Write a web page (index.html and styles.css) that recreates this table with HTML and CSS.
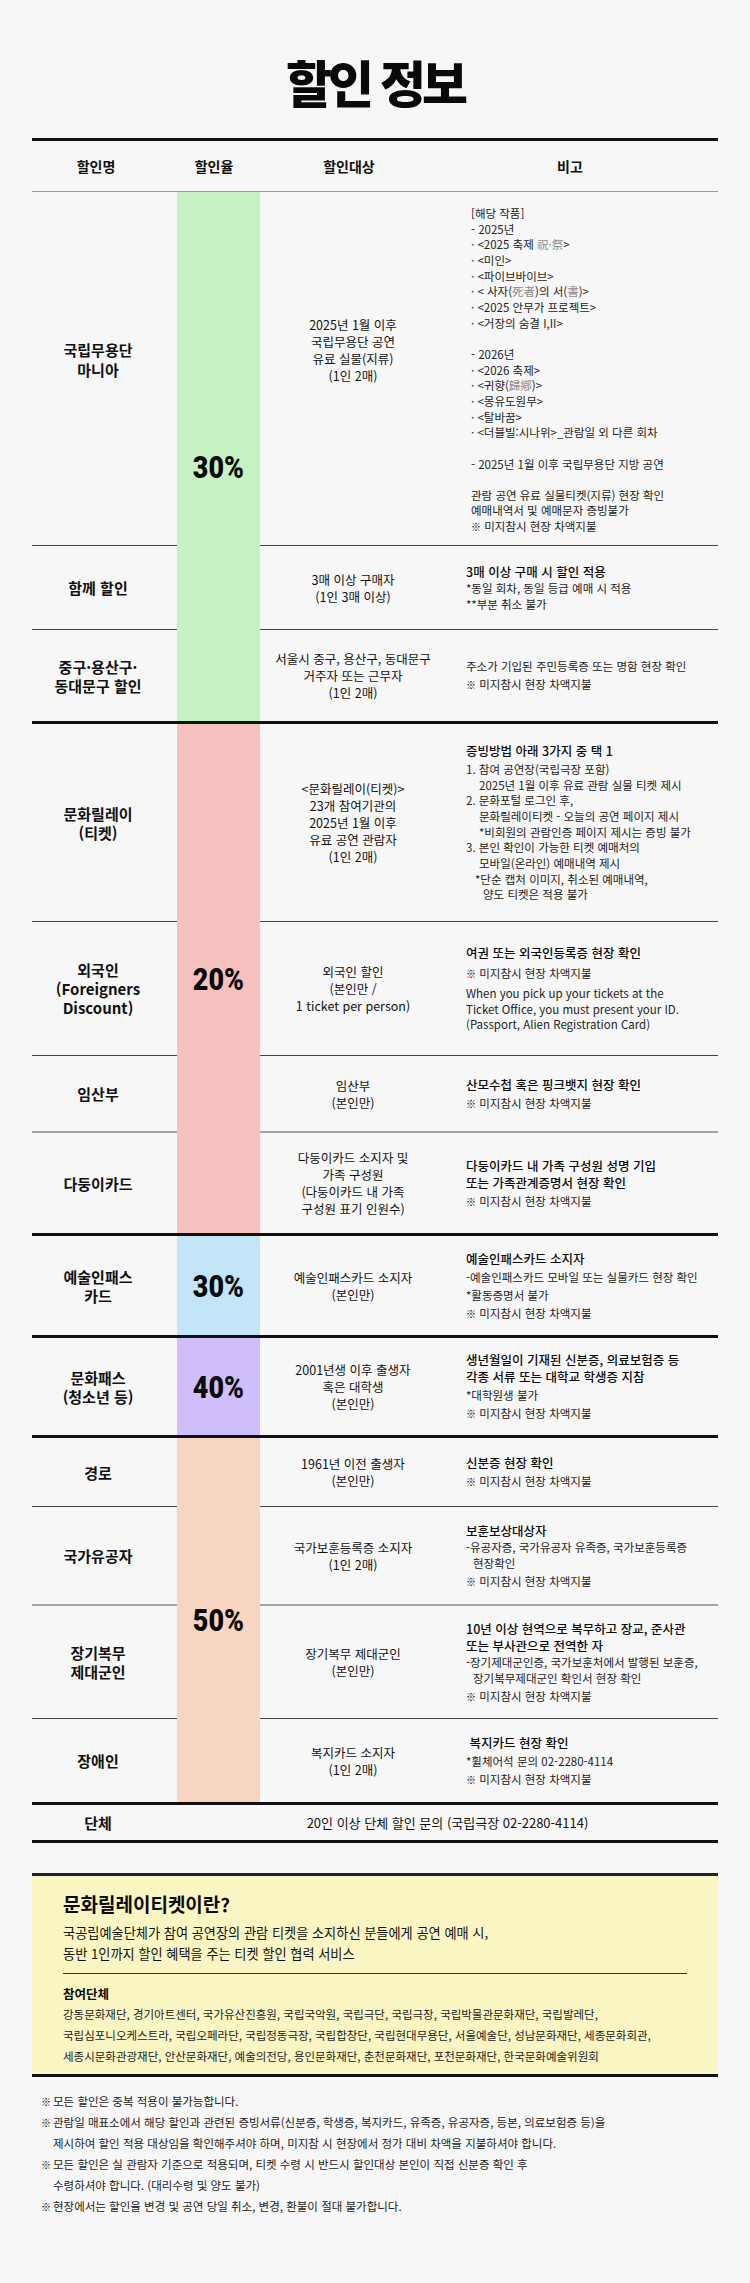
FILE: index.html
```html
<!DOCTYPE html>
<html lang="ko">
<head>
<meta charset="utf-8">
<title>할인 정보</title>
<link rel="stylesheet" href="styles.css">
</head>
<body>
<main class="page">
  <h1 class="title">할인 정보</h1>

  <section class="table">
    <div class="cols head">
      <div class="h-name">할인명</div>
      <div class="h-rate">할인율</div>
      <div class="h-target">할인대상</div>
      <div class="h-note">비고</div>
    </div>

    <!-- 30% group -->
    <div class="group first">
      <div class="rate green span3 rate-first"><span class="pct">30%</span></div>

      <div class="name mania-name">국립무용단<br>마니아</div>
      <div class="target mania-target">2025년 1월 이후<br>국립무용단 공연<br>유료 실물(지류)<br>(1인 2매)</div>
      <div class="note dense mania-note h354">
        <p>[해당 작품]<br>- 2025년<br>· &lt;2025 축제 <span class="hanja">祝·祭</span>&gt;<br>· &lt;미인&gt;<br>· &lt;파이브바이브&gt;<br>· &lt; 사자(<span class="hanja">死者</span>)의 서(<span class="hanja">書</span>)&gt;<br>· &lt;2025 안무가 프로젝트&gt;<br>· &lt;거장의 숨결 I,II&gt;<br><br>- 2026년<br>· &lt;2026 축제&gt;<br>· &lt;귀향(<span class="hanja">歸鄕</span>)&gt;<br>· &lt;몽유도원무&gt;<br>· &lt;탈바꿈&gt;<br>· &lt;더블빌:시나위&gt;_관람일 외 다른 회차<br><br>- 2025년 1월 이후 국립무용단 지방 공연<br><br>관람 공연 유료 실물티켓(지류) 현장 확인<br>예매내역서 및 예매문자 증빙불가<br><span class="mk">※</span> 미지참시 현장 차액지불</p>
      </div>

      <div class="name">함께 할인</div>
      <div class="target">3매 이상 구매자<br>(1인 3매 이상)</div>
      <div class="note h84">
        <p class="lead">3매 이상 구매 시 할인 적용</p>
        <p class="tight">*동일 회차, 동일 등급 예매 시 적용<br>**부분 취소 불가</p>
      </div>

      <div class="name">중구·용산구·<br>동대문구 할인</div>
      <div class="target">서울시 중구, 용산구, 동대문구<br>거주자 또는 근무자<br>(1인 2매)</div>
      <div class="note h91">
        <p>주소가 기입된 주민등록증 또는 명함 현장 확인</p>
        <p><span class="mk">※</span> 미지참시 현장 차액지불</p>
      </div>
    </div>

    <!-- 20% group -->
    <div class="group">
      <div class="rate pink span4"><span class="pct">20%</span></div>

      <div class="name">문화릴레이<br>(티켓)</div>
      <div class="target">&lt;문화릴레이(티켓)&gt;<br>23개 참여기관의<br>2025년 1월 이후<br>유료 공연 관람자<br>(1인 2매)</div>
      <div class="note h198">
        <p class="lead">증빙방법 아래 3가지 중 택 1</p>
        <p class="dense-p">1. 참여 공연장(국립극장 포함)<br><span class="ind2">2025년 1월 이후 유료 관람 실물 티켓 제시</span>2. 문화포털 로그인 후,<br><span class="ind2">문화릴레이티켓 - 오늘의 공연 페이지 제시</span><span class="ind2">*비회원의 관람인증 페이지 제시는 증빙 불가</span>3. 본인 확인이 가능한 티켓 예매처의<br><span class="ind2">모바일(온라인) 예매내역 제시</span><span class="ind1">*단순 캡처 이미지, 취소된 예매내역,</span><span class="ind3">양도 티켓은 적용 불가</span></p>
      </div>

      <div class="name">외국인<br>(Foreigners<br>Discount)</div>
      <div class="target">외국인 할인<br>(본인만 /<br>1 ticket per person)</div>
      <div class="note h134 roomy">
        <p class="lead">여권 또는 외국인등록증 현장 확인</p>
        <p><span class="mk">※</span> 미지참시 현장 차액지불</p>
        <p class="eng">When you pick up your tickets at the<br>Ticket Office, you must present your ID.<br>(Passport, Alien Registration Card)</p>
      </div>

      <div class="name lt">임산부</div>
      <div class="target lt">임산부<br>(본인만)</div>
      <div class="note lt h77">
        <p class="lead">산모수첩 혹은 핑크뱃지 현장 확인</p>
        <p><span class="mk">※</span> 미지참시 현장 차액지불</p>
      </div>

      <div class="name">다둥이카드</div>
      <div class="target">다둥이카드 소지자 및<br>가족 구성원<br>(다둥이카드 내 가족<br>구성원 표기 인원수)</div>
      <div class="note h100">
        <p class="lead">다둥이카드 내 가족 구성원 성명 기입<br>또는 가족관계증명서 현장 확인</p>
        <p><span class="mk">※</span> 미지참시 현장 차액지불</p>
      </div>
    </div>

    <!-- 30% art pass -->
    <div class="group">
      <div class="rate blue span1"><span class="pct">30%</span></div>
      <div class="name">예술인패스<br>카드</div>
      <div class="target">예술인패스카드 소지자<br>(본인만)</div>
      <div class="note h99">
        <p class="lead">예술인패스카드 소지자</p>
        <p>-예술인패스카드 모바일 또는 실물카드 현장 확인</p>
        <p>*활동증명서 불가</p>
        <p><span class="mk">※</span> 미지참시 현장 차액지불</p>
      </div>
    </div>

    <!-- 40% -->
    <div class="group">
      <div class="rate purple span1"><span class="pct">40%</span></div>
      <div class="name">문화패스<br>(청소년 등)</div>
      <div class="target">2001년생 이후 출생자<br>혹은 대학생<br>(본인만)</div>
      <div class="note h97">
        <p class="lead">생년월일이 기재된 신분증, 의료보험증 등<br>각종 서류 또는 대학교 학생증 지참</p>
        <p>*대학원생 불가</p>
        <p><span class="mk">※</span> 미지참시 현장 차액지불</p>
      </div>
    </div>

    <!-- 50% -->
    <div class="group">
      <div class="rate peach span4"><span class="pct">50%</span></div>

      <div class="name">경로</div>
      <div class="target">1961년 이전 출생자<br>(본인만)</div>
      <div class="note h69">
        <p class="lead">신분증 현장 확인</p>
        <p><span class="mk">※</span> 미지참시 현장 차액지불</p>
      </div>

      <div class="name lt">국가유공자</div>
      <div class="target lt">국가보훈등록증 소지자<br>(1인 2매)</div>
      <div class="note lt h99">
        <p class="lead">보훈보상대상자</p>
        <p class="tight">-유공자증, 국가유공자 유족증, 국가보훈등록증<br><span class="ind-dash">현장확인</span></p>
        <p><span class="mk">※</span> 미지참시 현장 차액지불</p>
      </div>

      <div class="name">장기복무<br>제대군인</div>
      <div class="target">장기복무 제대군인<br>(본인만)</div>
      <div class="note h113">
        <p class="lead">10년 이상 현역으로 복무하고 장교, 준사관<br>또는 부사관으로 전역한 자</p>
        <p class="tight">-장기제대군인증, 국가보훈처에서 발행된 보훈증,<br><span class="ind-dash">장기복무제대군인 확인서 현장 확인</span></p>
        <p><span class="mk">※</span> 미지참시 현장 차액지불</p>
      </div>

      <div class="name">장애인</div>
      <div class="target">복지카드 소지자<br>(1인 2매)</div>
      <div class="note h83">
        <p class="lead">&nbsp;복지카드 현장 확인</p>
        <p>*휠체어석 문의 02-2280-4114</p>
        <p><span class="mk">※</span> 미지참시 현장 차액지불</p>
      </div>
    </div>

    <div class="cols group-row">
      <div class="name solo">단체</div>
      <div class="group-text">20인 이상 단체 할인 문의 (국립극장 02-2280-4114)</div>
    </div>
  </section>

  <section class="relay">
    <h2 class="relay-title">문화릴레이티켓이란?</h2>
    <p class="relay-desc">국공립예술단체가 참여 공연장의 관람 티켓을 소지하신 분들에게 공연 예매 시,<br>동반 1인까지 할인 혜택을 주는 티켓 할인 협력 서비스</p>
    <hr class="relay-rule">
    <h3 class="relay-sub">참여단체</h3>
    <p class="relay-orgs">강동문화재단, 경기아트센터, 국가유산진흥원, 국립국악원, 국립극단, 국립극장, 국립박물관문화재단, 국립발레단,<br>국립심포니오케스트라, 국립오페라단, 국립정동극장, 국립합창단, 국립현대무용단, 서울예술단, 성남문화재단, 세종문화회관,<br>세종시문화관광재단, 안산문화재단, 예술의전당, 용인문화재단, 춘천문화재단, 포천문화재단, 한국문화예술위원회</p>
  </section>

  <ul class="notice">
    <li><span class="nmk">※</span><span>모든 할인은 중복 적용이 불가능합니다.</span></li>
    <li><span class="nmk">※</span><span>관람일 매표소에서 해당 할인과 관련된 증빙서류(신분증, 학생증, 복지카드, 유족증, 유공자증, 등본, 의료보험증 등)을<br>제시하여 할인 적용 대상임을 확인해주셔야 하며, 미지참 시 현장에서 정가 대비 차액을 지불하셔야 합니다.</span></li>
    <li><span class="nmk">※</span><span>모든 할인은 실 관람자 기준으로 적용되며, 티켓 수령 시 반드시 할인대상 본인이 직접 신분증 확인 후<br>수령하셔야 합니다. (대리수령 및 양도 불가)</span></li>
    <li><span class="nmk">※</span><span>현장에서는 할인율 변경 및 공연 당일 취소, 변경, 환불이 절대 불가합니다.</span></li>
  </ul>
</main>
</body>
</html>
```

FILE: styles.css
```css
* { box-sizing: border-box; }

body {
  margin: 0;
  background: #f7f7f7;
  color: #111;
  font-family: "Noto Sans CJK KR", "Noto Sans", "Liberation Sans", sans-serif;
}

.page {
  width: 750px;
  padding: 0 32px 40px;
}

.title {
  margin: 0;
  padding: 56px 0 32px;
  text-align: center;
  font-size: 50px;
  line-height: 50px;
  font-weight: 900;
  letter-spacing: -4px;
  color: #0a0a0a;
}

/* ---------- table ---------- */
.table {
  border-top: 3px solid #111;
  border-bottom: 3px solid #111;
}

.cols,
.group {
  display: grid;
  grid-template-columns: 145px 83px 186px 272px;
}

.head {
  height: 51px;
  align-items: center;
  border-bottom: 1px solid #9a9a9a;
  font-size: 14px;
  font-weight: 700;
  text-align: center;
}
.h-name { padding-right: 17px; }
.h-rate { padding-right: 9px; }
.h-target { padding-right: 8px; }
.h-note { padding-right: 24px; }

.group { border-top: 3px solid #111; }
.group.first { border-top: 0; }

.rate {
  grid-column: 2;
  display: flex;
  align-items: center;
  justify-content: center;
}
.span1 { grid-row: 1 / span 1; }
.span3 { grid-row: 1 / span 3; }
.span4 { grid-row: 1 / span 4; }
.rate-first { padding-top: 20px; }

.green { background: #c5f2c3; }
.pink { background: #f5c1bf; }
.blue { background: #c4e4f7; }
.purple { background: #d0befc; }
.peach { background: #f7d5c1; }

.pct {
  display: inline-block;
  font-family: Roboto, "Liberation Sans", sans-serif;
  font-size: 32px;
  font-weight: 900;
  line-height: 1;
  transform: scaleX(0.84);
  color: #0a0a0a;
}

.name,
.target,
.note {
  border-bottom: 1px solid #444;
}
.group > :nth-last-child(-n+3) { border-bottom: 0; }
.name.lt,
.target.lt,
.note.lt { border-bottom: 2px solid #a3a3a3; }

.name {
  grid-column: 1;
  display: flex;
  align-items: center;
  justify-content: center;
  padding-right: 13px;
  text-align: center;
  font-size: 15px;
  line-height: 19px;
  font-weight: 700;
}
.mania-name { padding-bottom: 17px; line-height: 20px; }

.target {
  grid-column: 3;
  display: flex;
  align-items: center;
  justify-content: center;
  text-align: center;
  font-size: 12.5px;
  line-height: 17px;
  color: #111;
}
.mania-target { padding-bottom: 38px; }

.note {
  grid-column: 4;
  display: flex;
  flex-direction: column;
  justify-content: center;
  padding-left: 20px;
  font-size: 11.5px;
  line-height: 16px;
  color: #222;
  white-space: nowrap;
}
.note p { margin: 0; }
.note p + p { margin-top: 2px; }
.note .lead {
  font-size: 12.5px;
  line-height: 17px;
  font-weight: 500;
  color: #0a0a0a;
}
.note p.tight { margin-top: 0; }
.note p.dense-p { margin-top: 3px; line-height: 15.7px; }
.note.roomy p + p { margin-top: 4px; }
.note .eng { line-height: 15.5px; }

.dense { line-height: 15.65px; }
.mania-note { padding: 14px 0 10px 25px; justify-content: flex-start; }

.hanja { color: #8c8c8c; }

.mk {
  font-size: 10px;
  font-weight: 900;
  color: #000;
}

.ind1 { display: block; padding-left: 9px; }
.ind2 { display: block; padding-left: 13px; }
.ind3 { display: block; padding-left: 17px; }
.ind-dash { display: inline-block; padding-left: 7px; }

/* row heights */
.h354 { min-height: 354px; }
.h84 { min-height: 84px; }
.h91 { min-height: 91px; }
.h198 { min-height: 198px; }
.h134 { min-height: 134px; }
.h77 { min-height: 77px; }
.h100 { min-height: 100px; }
.h99 { min-height: 99px; }
.h97 { min-height: 97px; }
.h69 { min-height: 69px; }
.h113 { min-height: 113px; }
.h83 { min-height: 83px; }

/* group row */
.group-row {
  border-top: 3px solid #111;
  height: 38px;
  align-items: center;
}
.name.solo { border-bottom: 0; height: 100%; }
.group-text {
  grid-column: 2 / span 3;
  text-align: center;
  font-size: 13px;
  color: #111;
}

/* ---------- relay box ---------- */
.relay {
  margin-top: 30px;
  background: #faf6c4;
  border-top: 3px solid #222;
  border-bottom: 3px solid #111;
  padding: 15px 31px 7px;
}
.relay-title {
  margin: 0;
  font-size: 19px;
  line-height: 26px;
  font-weight: 700;
  color: #0a0a0a;
}
.relay-desc {
  margin: 4.5px 0 0;
  font-size: 13.2px;
  line-height: 21px;
  color: #111;
}
.relay-rule {
  margin: 9.5px 0 0;
  border: 0;
  border-top: 1px solid #333;
  height: 0;
}
.relay-sub {
  margin: 10px 0 0;
  font-size: 12.5px;
  line-height: 20px;
  font-weight: 700;
  color: #0a0a0a;
}
.relay-orgs {
  margin: 0;
  font-size: 11.5px;
  line-height: 21px;
  color: #222;
  white-space: nowrap;
}

/* ---------- notices ---------- */
.notice {
  list-style: none;
  margin: 14px 0 0;
  padding: 0 0 0 9px;
  font-size: 11.5px;
  line-height: 21px;
  color: #222;
}
.notice li {
  display: flex;
  white-space: nowrap;
}
.nmk {
  flex: 0 0 12px;
  font-size: 10px;
  font-weight: 900;
  color: #000;
}
```
